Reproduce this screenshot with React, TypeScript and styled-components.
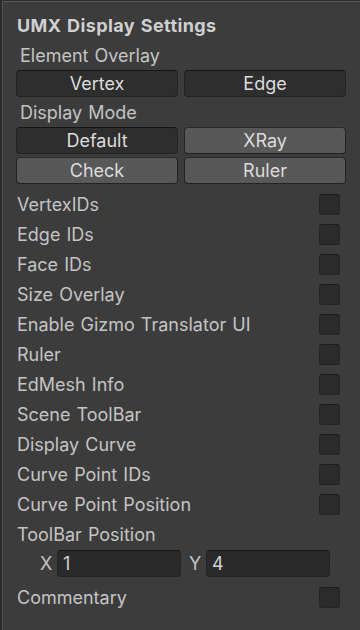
import React from "react";
import styled, { createGlobalStyle } from "styled-components";

const Global = createGlobalStyle`
  html, body { margin: 0; padding: 0; background: #3c3c3c; }
  body { font-family: Inter, "Noto Sans", sans-serif; }
  * { box-sizing: border-box; }
`;

const Frame = styled.div`
  width: 360px;
  height: 630px;
  border-left: 2px solid #2c2c2c;
  border-top: 1px solid #2c2c2c;
  overflow: hidden;
`;

const Panel = styled.div`
  height: 100%;
  border-left: 1px solid #505050;
  border-top: 1px solid #5c5c5c;
  background: #3c3c3c;
  padding: 10px 11px 0 13px;
  display: flex;
  flex-direction: column;
  color: #c4c4c4;
  font-size: 18px;
  word-spacing: 1px;
`;

const Title = styled.div`
  height: 28px;
  line-height: 28px;
  font-weight: 700;
  color: #d0d0d0;
  padding-left: 1px;
  letter-spacing: 0.4px;
`;

const SectionLabel = styled.div`
  height: 28px;
  line-height: 28px;
  padding-left: 4px;
  margin-top: 2px;
`;

const ButtonRow = styled.div<{ $gapTop?: number }>`
  display: grid;
  grid-template-columns: 162px 162px;
  column-gap: 6px;
  margin-top: ${(p) => p.$gapTop ?? 0}px;
`;

const ToggleButton = styled.div<{ $active?: boolean }>`
  height: 27px;
  border-radius: 4px;
  border: 1px solid #232323;
  border-top-color: ${(p) => (p.$active ? "#141414" : "#2a2a2a")};
  background: ${(p) => (p.$active ? "#2e2e2e" : "#585858")};
  color: #dcdcdc;
  display: flex;
  align-items: center;
  justify-content: center;
  font-size: 18px;
`;

const Rows = styled.div`
  margin-top: 5px;
  display: flex;
  flex-direction: column;
`;

const Row = styled.div`
  width: 324px;
  height: 30px;
  display: flex;
  align-items: center;
  justify-content: space-between;
  padding-left: 1px;
`;

const Check = styled.div`
  width: 21px;
  height: 21px;
  border-radius: 3px;
  background: #2b2b2b;
  border: 1px solid #252525;
  border-top-color: #1c1c1c;
`;

const FieldRow = styled.div`
  height: 27px;
  display: flex;
  align-items: center;
  margin-top: 1px;
  padding-left: 24px;
`;

const AxisLabel = styled.span<{ $ml?: number }>`
  width: 17px;
  margin-left: ${(p) => p.$ml ?? 0}px;
  color: #c4c4c4;
`;

const Field = styled.div`
  width: 124px;
  height: 27px;
  border-radius: 4px;
  background: #2a2a2a;
  border: 1px solid #242424;
  border-top-color: #141414;
  color: #d2d2d2;
  padding-left: 5px;
  display: flex;
  align-items: center;
`;

const CommentRow = styled(Row)`
  margin-top: 5px;
`;

const checkItems = [
  "VertexIDs",
  "Edge IDs",
  "Face IDs",
  "Size Overlay",
  "Enable Gizmo Translator UI",
  "Ruler",
  "EdMesh Info",
  "Scene ToolBar",
  "Display Curve",
  "Curve Point IDs",
  "Curve Point Position",
];

export default function App() {
  return (
    <>
      <Global />
      <Frame>
        <Panel>
          <Title>UMX Display Settings</Title>
          <SectionLabel>Element Overlay</SectionLabel>
          <ButtonRow>
            <ToggleButton $active>Vertex</ToggleButton>
            <ToggleButton $active>Edge</ToggleButton>
          </ButtonRow>
          <SectionLabel>Display Mode</SectionLabel>
          <ButtonRow>
            <ToggleButton $active>Default</ToggleButton>
            <ToggleButton>XRay</ToggleButton>
          </ButtonRow>
          <ButtonRow $gapTop={3}>
            <ToggleButton>Check</ToggleButton>
            <ToggleButton>Ruler</ToggleButton>
          </ButtonRow>
          <Rows>
            {checkItems.map((label) => (
              <Row key={label}>
                <span>{label}</span>
                <Check />
              </Row>
            ))}
            <Row>
              <span>ToolBar Position</span>
            </Row>
          </Rows>
          <FieldRow>
            <AxisLabel>X</AxisLabel>
            <Field>1</Field>
            <AxisLabel $ml={8}>Y</AxisLabel>
            <Field>4</Field>
          </FieldRow>
          <CommentRow>
            <span>Commentary</span>
            <Check />
          </CommentRow>
        </Panel>
      </Frame>
    </>
  );
}
